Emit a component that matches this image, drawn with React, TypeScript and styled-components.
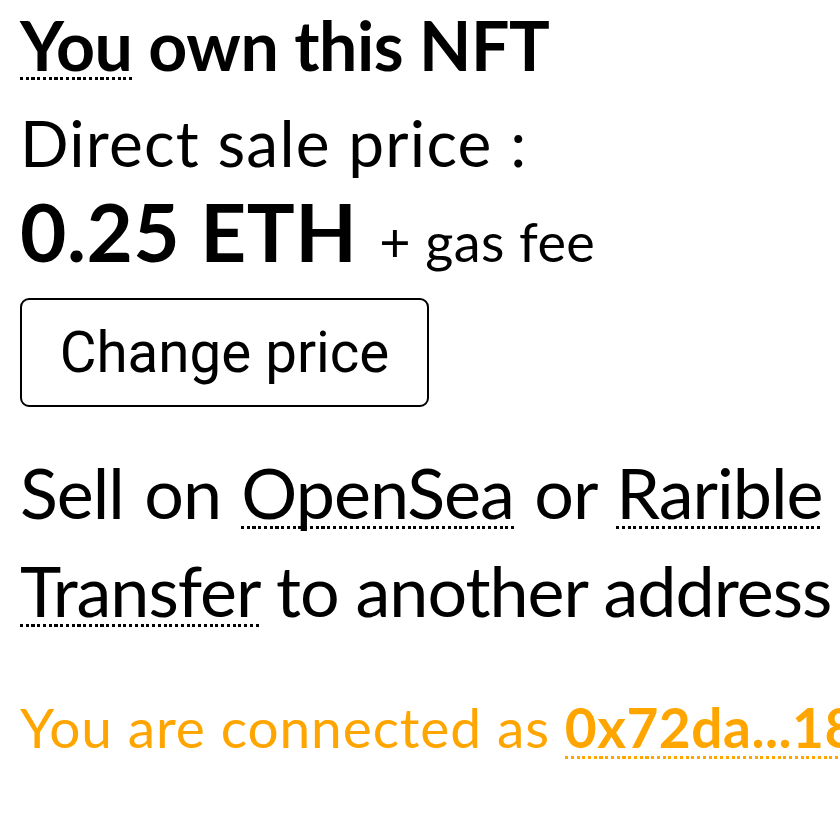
import React from "react";
import styled, { createGlobalStyle } from "styled-components";

const GlobalStyle = createGlobalStyle`
  html, body { margin: 0; padding: 0; background: #ffffff; }
  body { font-family: "Lato", "Noto Sans", sans-serif; color: #000000; overflow: hidden; }
`;

const Page = styled.main`
  display: flex;
  flex-direction: column;
  align-items: flex-start;
  padding: 5px 0 0 20px;
  width: 840px;
  box-sizing: border-box;
  white-space: nowrap;
  overflow: hidden;
`;

/* dotted underline drawn as 3px squares, placed relative to the baseline */
const Dotted = styled.span<{ $below?: number }>`
  background-image: repeating-linear-gradient(
    to right,
    currentColor 0 3px,
    transparent 3px 5.75px
  );
  background-repeat: no-repeat;
  background-size: 100% 3px;
  background-position: 0 calc(100% - 0.213em + ${(p) => p.$below ?? 9.5}px);
  cursor: pointer;
`;

const Title = styled.h1`
  margin: 0;
  font-size: 68px;
  font-weight: 700;
  line-height: 80px;
  letter-spacing: -0.5px;
`;

const PriceLabel = styled.div`
  margin-top: 18px;
  font-size: 64px;
  line-height: 80px;
  letter-spacing: 1.2px;
`;

const PriceRow = styled.div`
  margin-top: 3px;
  height: 90px;
  display: flex;
  align-items: baseline;
  gap: 22px;
  line-height: 90px;
`;

const PriceValue = styled.span`
  font-size: 80px;
  font-weight: 700;
  letter-spacing: 0.5px;
`;

const GasFee = styled.span`
  font-size: 54px;
  letter-spacing: 0.4px;
`;

const ChangeButton = styled.button`
  margin-top: 22px;
  width: 409px;
  height: 109px;
  box-sizing: border-box;
  border: 2px solid #000000;
  border-radius: 9px;
  background: #ffffff;
  color: #000000;
  font-family: "Roboto", sans-serif;
  font-size: 56.5px;
  padding: 0;
  display: flex;
  align-items: center;
  justify-content: center;
  cursor: pointer;
`;

const ActionList = styled.div`
  margin-top: 36px;
  display: flex;
  flex-direction: column;
`;

const ActionLine = styled.div<{ $wordGap?: number }>`
  font-size: 70px;
  line-height: 98px;
  letter-spacing: -1px;
  word-spacing: ${(p) => p.$wordGap ?? 0}px;
`;

const Connected = styled.div`
  margin-top: 53px;
  font-size: 55px;
  line-height: 70px;
  color: #ffa500;
  letter-spacing: 0.9px;
`;

const Address = styled(Dotted)`
  font-weight: 700;
  letter-spacing: 0.5px;
`;

export default function App() {
  return (
    <>
      <GlobalStyle />
      <Page>
        <Title>
          <Dotted>You</Dotted> own this NFT
        </Title>
        <PriceLabel>Direct sale price :</PriceLabel>
        <PriceRow>
          <PriceValue>0.25 ETH</PriceValue>
          <GasFee>+ gas fee</GasFee>
        </PriceRow>
        <ChangeButton type="button">Change price</ChangeButton>
        <ActionList>
          <ActionLine $wordGap={3.5}>
            Sell on <Dotted>OpenSea</Dotted> or <Dotted>Rarible</Dotted>
          </ActionLine>
          <ActionLine>
            <Dotted>Transfer</Dotted> to another address
          </ActionLine>
        </ActionList>
        <Connected>
          You are connected as <Address $below={10.5}>0x72da...18f3</Address>
        </Connected>
      </Page>
    </>
  );
}
